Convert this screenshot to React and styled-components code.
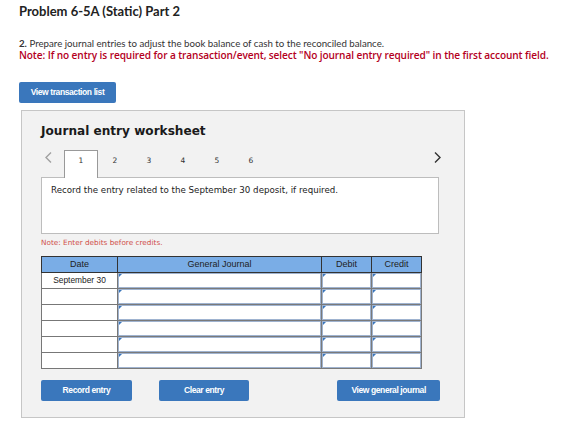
import React from "react";
import styled, { createGlobalStyle } from "styled-components";

const GlobalStyle = createGlobalStyle`
  body {
    margin: 0;
    background: #fff;
    font-family: "Lato", "Liberation Sans", sans-serif;
  }
`;

const Page = styled.div`
  padding: 3px 0 0 19px;
  width: 573px;
  box-sizing: border-box;
`;

const Title = styled.h1`
  margin: 0;
  font-size: 13px;
  font-weight: 700;
  color: #222;
  line-height: 16px;
`;

const Instruction = styled.p`
  margin: 19px 0 0;
  font-size: 9.7px;
  line-height: 11px;
  color: #333;
`;

const NoteLine = styled.p`
  margin: 0;
  font-family: "Open Sans", "Lato", sans-serif;
  font-size: 10.1px;
  line-height: 12px;
  font-weight: 600;
  letter-spacing: -0.1px;
  color: #b4001e;
`;

const BlueButton = styled.button`
  width: ${(p) => p.$w}px;
  height: 21px;
  padding: 0;
  border: none;
  border-radius: 2px;
  background: #3a77bc;
  color: #fff;
  font-family: "Liberation Sans", Arial, sans-serif;
  font-size: 8.5px;
  font-weight: 700;
  letter-spacing: -0.4px;
  cursor: pointer;
`;

const TopAction = styled.div`
  margin-top: 18px;
`;

const Panel = styled.section`
  margin: 7px 0 0 2px;
  width: 444px;
  height: 308px;
  box-sizing: border-box;
  border: 1px solid #c6c6c6;
  background: #f2f2f2;
  padding: 11px 24px 0 19px;
  font-family: "DejaVu Sans", Verdana, sans-serif;
`;

const PanelTitle = styled.h2`
  margin: 0;
  font-size: 12.1px;
  font-weight: 700;
  color: #1a1a1a;
  line-height: 18px;
`;

const TabRow = styled.div`
  display: flex;
  align-items: flex-end;
  margin-top: 9px;
  height: 28px;
`;

const Arrow = styled.span`
  width: 23px;
  height: 18px;
  display: flex;
  align-items: center;
  align-self: flex-start;
  padding-left: 4px;
  box-sizing: border-box;
  color: ${(p) => (p.$muted ? "#a0a0a0" : "#333")};
`;

const Tab = styled.div`
  width: 34px;
  height: 28px;
  box-sizing: border-box;
  display: flex;
  justify-content: center;
  padding-top: 5px;
  font-size: 7.5px;
  color: #333;
  background: ${(p) => (p.$active ? "#fff" : "transparent")};
  border: 1px solid ${(p) => (p.$active ? "#999" : "transparent")};
  border-bottom: none;
  margin-bottom: -1px;
  position: relative;
  z-index: 1;
`;

const Spacer = styled.div`
  flex: 1;
`;

const RightArrow = styled(Arrow)`
  width: auto;
  padding: 0;
  margin-right: -1px;
`;

const Prompt = styled.div`
  height: 57px;
  box-sizing: border-box;
  width: 398px;
  border: 1px solid #bdbdbd;
  background: #fff;
  padding: 7px 9px;
  font-size: 8.7px;
  color: #222;
`;

const SmallNote = styled.div`
  margin-top: 4px;
  font-size: 7.3px;
  color: #d0504a;
`;

const Table = styled.table`
  margin-top: 9px;
  border-collapse: collapse;
  font-family: "Liberation Sans", Arial, sans-serif;
  font-size: 8.4px;
  color: #222;
`;

const Th = styled.th`
  width: ${(p) => p.$w}px;
  height: 15px;
  padding: 0;
  font-size: 9px;
  font-weight: 400;
  background: #7aade6;
  border: 1px solid #333;
`;

const DateCell = styled.td`
  height: 15px;
  padding: 0;
  text-align: center;
  background: #fff;
  border: 1px solid #777;
`;

const InputCell = styled.td`
  height: 15px;
  padding: 0;
  border: 1px solid #7a7a7a;
  background: #fff;
  position: relative;
  box-shadow: inset 0 0 0 1px #9fb3d0;
  &::before {
    content: "";
    position: absolute;
    left: 1px;
    top: 1px;
    border-top: 3px solid #3a77bc;
    border-right: 3px solid transparent;
  }
`;

const ButtonRow = styled.div`
  display: flex;
  margin-top: 11px;
`;

const Gap = styled.div`
  width: ${(p) => p.$w}px;
`;

const Chevron = ({ dir }) => (
  <svg width="7" height="11" viewBox="0 0 7 11">
    <polyline
      points={dir === "left" ? "6,0.5 1,5.5 6,10.5" : "1,0.5 6,5.5 1,10.5"}
      fill="none"
      stroke="currentColor"
      strokeWidth="1.4"
    />
  </svg>
);

const rows = ["September 30", "", "", "", "", ""];

export default function App() {
  return (
    <Page>
      <GlobalStyle />
      <Title>Problem 6-5A (Static) Part 2</Title>
      <Instruction>
        <b>2.</b> Prepare journal entries to adjust the book balance of cash to the reconciled balance.
      </Instruction>
      <NoteLine>
        Note: If no entry is required for a transaction/event, select "No journal entry required" in the first account field.
      </NoteLine>
      <TopAction>
        <BlueButton $w={97}>View transaction list</BlueButton>
      </TopAction>
      <Panel>
        <PanelTitle>Journal entry worksheet</PanelTitle>
        <TabRow>
          <Arrow $muted>
            <Chevron dir="left" />
          </Arrow>
          {[1, 2, 3, 4, 5, 6].map((n) => (
            <Tab key={n} $active={n === 1}>{n}</Tab>
          ))}
          <Spacer />
          <RightArrow>
            <Chevron dir="right" />
          </RightArrow>
        </TabRow>
        <Prompt>Record the entry related to the September 30 deposit, if required.</Prompt>
        <SmallNote>Note: Enter debits before credits.</SmallNote>
        <Table>
          <thead>
            <tr>
              <Th $w={75}>Date</Th>
              <Th $w={203}>General Journal</Th>
              <Th $w={49}>Debit</Th>
              <Th $w={49}>Credit</Th>
            </tr>
          </thead>
          <tbody>
            {rows.map((d, i) => (
              <tr key={i}>
                <DateCell>{d}</DateCell>
                <InputCell />
                <InputCell />
                <InputCell />
              </tr>
            ))}
          </tbody>
        </Table>
        <ButtonRow>
          <BlueButton $w={92}>Record entry</BlueButton>
          <Gap $w={27} />
          <BlueButton $w={92}>Clear entry</BlueButton>
          <Gap $w={89} />
          <BlueButton $w={104}>View general journal</BlueButton>
        </ButtonRow>
      </Panel>
    </Page>
  );
}
